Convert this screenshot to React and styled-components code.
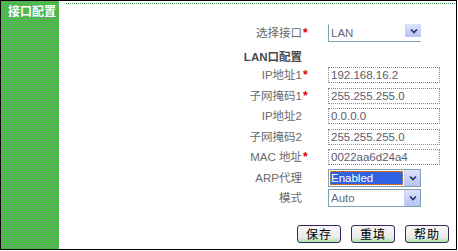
import React from 'react'
import styled, { createGlobalStyle, css } from 'styled-components'

const Global = createGlobalStyle`
  html, body { margin: 0; padding: 0; background: #fff; }
  body { font-family: "Liberation Sans", "Noto Sans CJK SC", sans-serif; }
`

const Frame = styled.div`
  box-sizing: border-box;
  width: 457px;
  height: 250px;
  border: 1px solid #000;
  display: flex;
`

const Side = styled.div`
  width: 58px;
  flex-shrink: 0;
  background-color: #3cc43c;
  background-image:
    linear-gradient(45deg, #62a862 25%, transparent 25%, transparent 75%, #62a862 75%),
    linear-gradient(45deg, #62a862 25%, transparent 25%, transparent 75%, #62a862 75%);
  background-size: 2px 2px;
  background-position: 0 0, 1px 1px;
`

const SideTitle = styled.div`
  color: #fff;
  font-family: "Noto Sans CJK SC", sans-serif;
  font-weight: 700;
  font-size: 12px;
  line-height: 14px;
  padding: 3px 0 0 7px;
`

const Main = styled.div`
  flex: 1;
  display: flex;
  flex-direction: column;
`

const Rule = styled.div`
  margin: 2px 1px 0 7px;
  border-top: 1px dotted #2e8a4e;
`

const Form = styled.div`
  margin-top: 20px;
  display: grid;
  grid-template-columns: 243px 26px 1fr;
  grid-template-rows: 18px 22.75px repeat(7, 20.5px);
  align-items: center;
`

const Label = styled.div`
  text-align: right;
  color: #6a6a6a;
  font-size: 11.5px;
  line-height: 14px;
  white-space: nowrap;
`

const Heading = styled(Label)`
  color: #4a4a4a;
  font-weight: 700;
  align-self: end;
  margin-bottom: 1px;
`

const Star = styled.div`
  color: #e00000;
  font-size: 12px;
  font-weight: 700;
  line-height: 12px;
  padding-left: 1px;
`

const Input = styled.div`
  box-sizing: border-box;
  width: 112px;
  height: 16px;
  border: 1px dotted #8a8a8a;
  color: #5c5c6c;
  font-size: 11.5px;
  line-height: 14px;
  padding-left: 2px;
  white-space: nowrap;
`

const Select = styled.div`
  box-sizing: border-box;
  width: 93px;
  height: 18px;
  display: flex;
  align-items: stretch;
  border: 1px solid #7fa2b0;
  ${p => p.$open && css`
    border-top-color: transparent;
    border-right-color: transparent;
  `}
`

const Value = styled.div`
  flex: 1;
  margin: 1px;
  padding-left: 1px;
  font-size: 11.5px;
  line-height: 14px;
  color: #6a6a7a;
  ${p => p.$active && css`
    background: #2f62e2;
    color: #fff;
    outline: 1px dotted #e08a3a;
    outline-offset: -1px;
  `}
`

const Arrow = styled.div`
  width: 15px;
  height: ${p => (p.$open ? '13px' : 'auto')};
  margin: ${p => (p.$open ? '-1px -1px 0 0' : '0')};
  background: linear-gradient(#dde2fc, #b8c2f4);
  border-left: 1px solid #c8d0f4;
  display: flex;
  align-items: center;
  justify-content: center;
`

const Buttons = styled.div`
  margin-top: 17px;
  padding-right: 7px;
  display: flex;
  justify-content: flex-end;
  gap: 10px;
`

const Button = styled.button`
  box-sizing: border-box;
  width: 44px;
  height: 18px;
  padding: 0;
  border: 1px solid #35285e;
  border-radius: 3px;
  background: linear-gradient(#f6f6f6, #ececec 70%, #a8e4a0);
  color: #000;
  font-family: "Noto Sans CJK SC", sans-serif;
  font-size: 12px;
  line-height: 14px;
  letter-spacing: 1px;
`

function Chevron() {
  return (
    <svg width="8" height="6" viewBox="0 0 8 6">
      <path d="M1 1.5 L4 4.5 L7 1.5" fill="none" stroke="#23306a" strokeWidth="1.6" />
    </svg>
  )
}

function Row({ label, required, children }) {
  return (
    <>
      <Label>{label}</Label>
      <Star>{required ? '*' : ''}</Star>
      <div>{children}</div>
    </>
  )
}

const fields = [
  { label: 'IP地址1', required: true, value: '192.168.16.2' },
  { label: '子网掩码1', required: true, value: '255.255.255.0' },
  { label: 'IP地址2', value: '0.0.0.0' },
  { label: '子网掩码2', value: '255.255.255.0' },
  { label: 'MAC 地址', required: true, value: '0022aa6d24a4' },
]

export default function App() {
  return (
    <>
      <Global />
      <Frame>
        <Side>
          <SideTitle>接口配置</SideTitle>
        </Side>
        <Main>
          <Rule />
          <Form>
            <Row label="选择接口" required>
              <Select $open>
                <Value>LAN</Value>
                <Arrow $open><Chevron /></Arrow>
              </Select>
            </Row>
            <Heading>LAN口配置</Heading>
            <div />
            <div />
            {fields.map(f => (
              <Row key={f.label} label={f.label} required={f.required}>
                <Input>{f.value}</Input>
              </Row>
            ))}
            <Row label="ARP代理">
              <Select>
                <Value $active>Enabled</Value>
                <Arrow><Chevron /></Arrow>
              </Select>
            </Row>
            <Row label="模式">
              <Select>
                <Value>Auto</Value>
                <Arrow><Chevron /></Arrow>
              </Select>
            </Row>
          </Form>
          <Buttons>
            <Button>保存</Button>
            <Button>重填</Button>
            <Button>帮助</Button>
          </Buttons>
        </Main>
      </Frame>
    </>
  )
}
